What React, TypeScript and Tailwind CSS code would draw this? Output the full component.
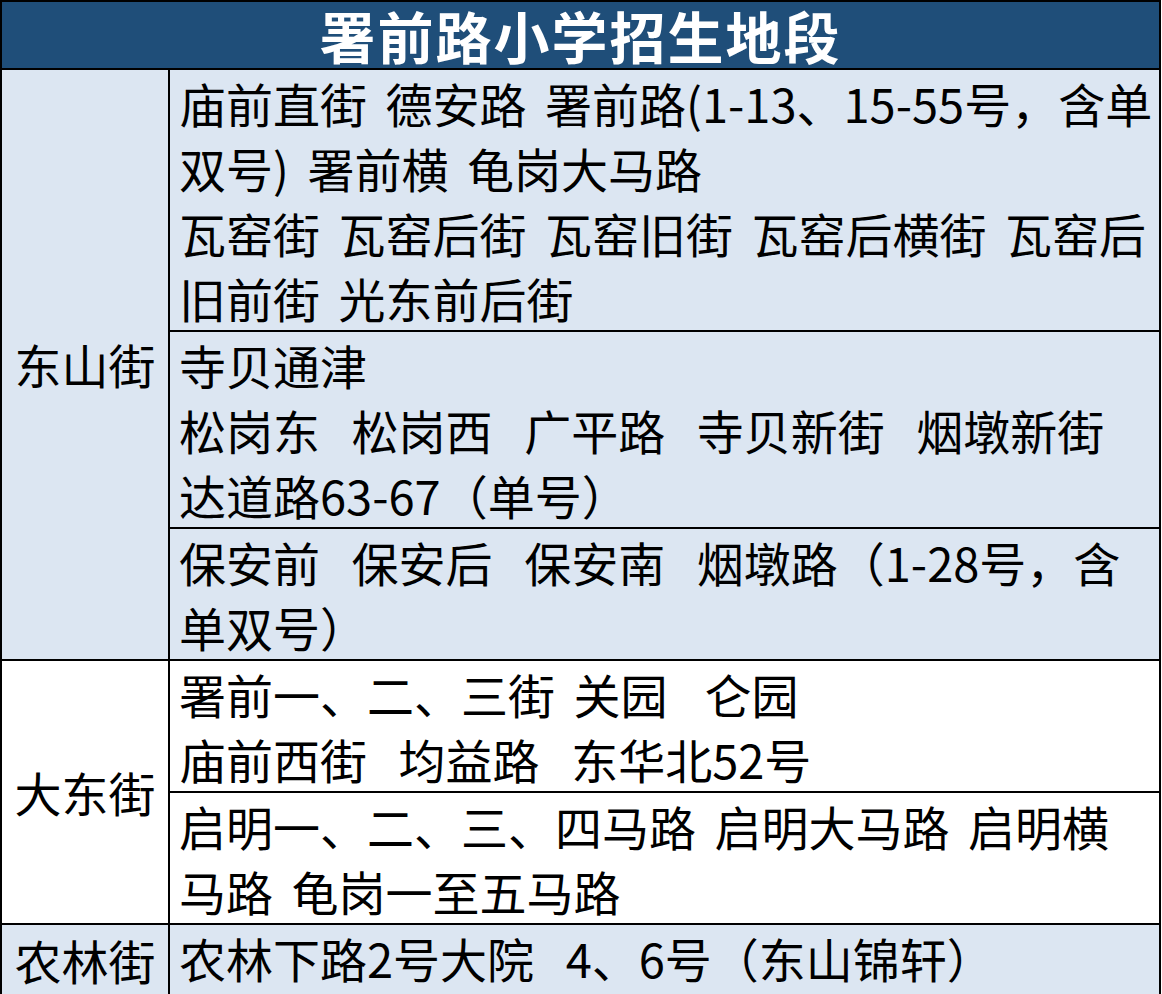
import React from 'react';

interface Group {
  lines: string[];
  wide?: boolean; // lines split by single spaces get a wider word gap
}

interface District {
  name: string;
  tint: boolean;
  cells: Group[][]; // each cell is a bordered box holding one or more line groups
}

const districts: District[] = [
  {
    name: '东山街',
    tint: true,
    cells: [
      [
        {
          wide: true,
          lines: [
            '庙前直街 德安路 署前路(1-13、15-55号，含单',
            '双号) 署前横 龟岗大马路',
            '瓦窑街 瓦窑后街 瓦窑旧街 瓦窑后横街 瓦窑后',
            '旧前街 光东前后街',
          ],
        },
      ],
      [{ lines: ['寺贝通津', '松岗东   松岗西   广平路   寺贝新街   烟墩新街', '达道路63-67（单号）'] }],
      [{ lines: ['保安前   保安后   保安南   烟墩路（1-28号，含', '单双号）'] }],
    ],
  },
  {
    name: '大东街',
    tint: false,
    cells: [
      [{ wide: true, lines: ['署前一、二、三街 关园  仑园'] }, { lines: ['庙前西街   均益路   东华北52号'] }],
      [{ wide: true, lines: ['启明一、二、三、四马路 启明大马路 启明横', '马路 龟岗一至五马路'] }],
    ],
  },
  {
    name: '农林街',
    tint: true,
    cells: [[{ lines: ['农林下路2号大院   4、6号（东山锦轩）'] }]],
  },
];

function Line({ text, wide }: { text: string; wide?: boolean }) {
  return (
    <div className={`text-[47px] leading-[65px] text-black whitespace-pre ${wide ? '[word-spacing:8px]' : ''}`}>
      {text}
    </div>
  );
}

export default function App() {
  return (
    <div
      className="w-[1162px] h-[994px] bg-white"
      style={{ fontFamily: '"Noto Sans CJK SC", "Noto Sans", sans-serif' }}
    >
      <div className="w-[1161px] border-2 border-black">
        {/* Title bar */}
        <div className="h-[66px] bg-[#1f4e79] text-center text-white text-[56px] font-bold leading-[66px] tracking-[2px]">
          署前路小学招生地段
        </div>

        {districts.map((d) => (
          <div key={d.name} className={`flex border-t-2 border-black ${d.tint ? 'bg-[#dce6f2]' : 'bg-white'}`}>
            <div className="w-[166px] shrink-0 flex items-center justify-center text-[47px] text-black">
              {d.name}
            </div>
            <div className="flex-1 border-l-2 border-black">
              {d.cells.map((cell, i) => (
                <div key={i} className={`pl-[9px] ${i > 0 ? 'border-t-2 border-black' : ''}`}>
                  {cell.map((g, k) => g.lines.map((l, j) => <Line key={`${k}-${j}`} text={l} wide={g.wide} />))}
                </div>
              ))}
            </div>
          </div>
        ))}
      </div>
    </div>
  );
}
